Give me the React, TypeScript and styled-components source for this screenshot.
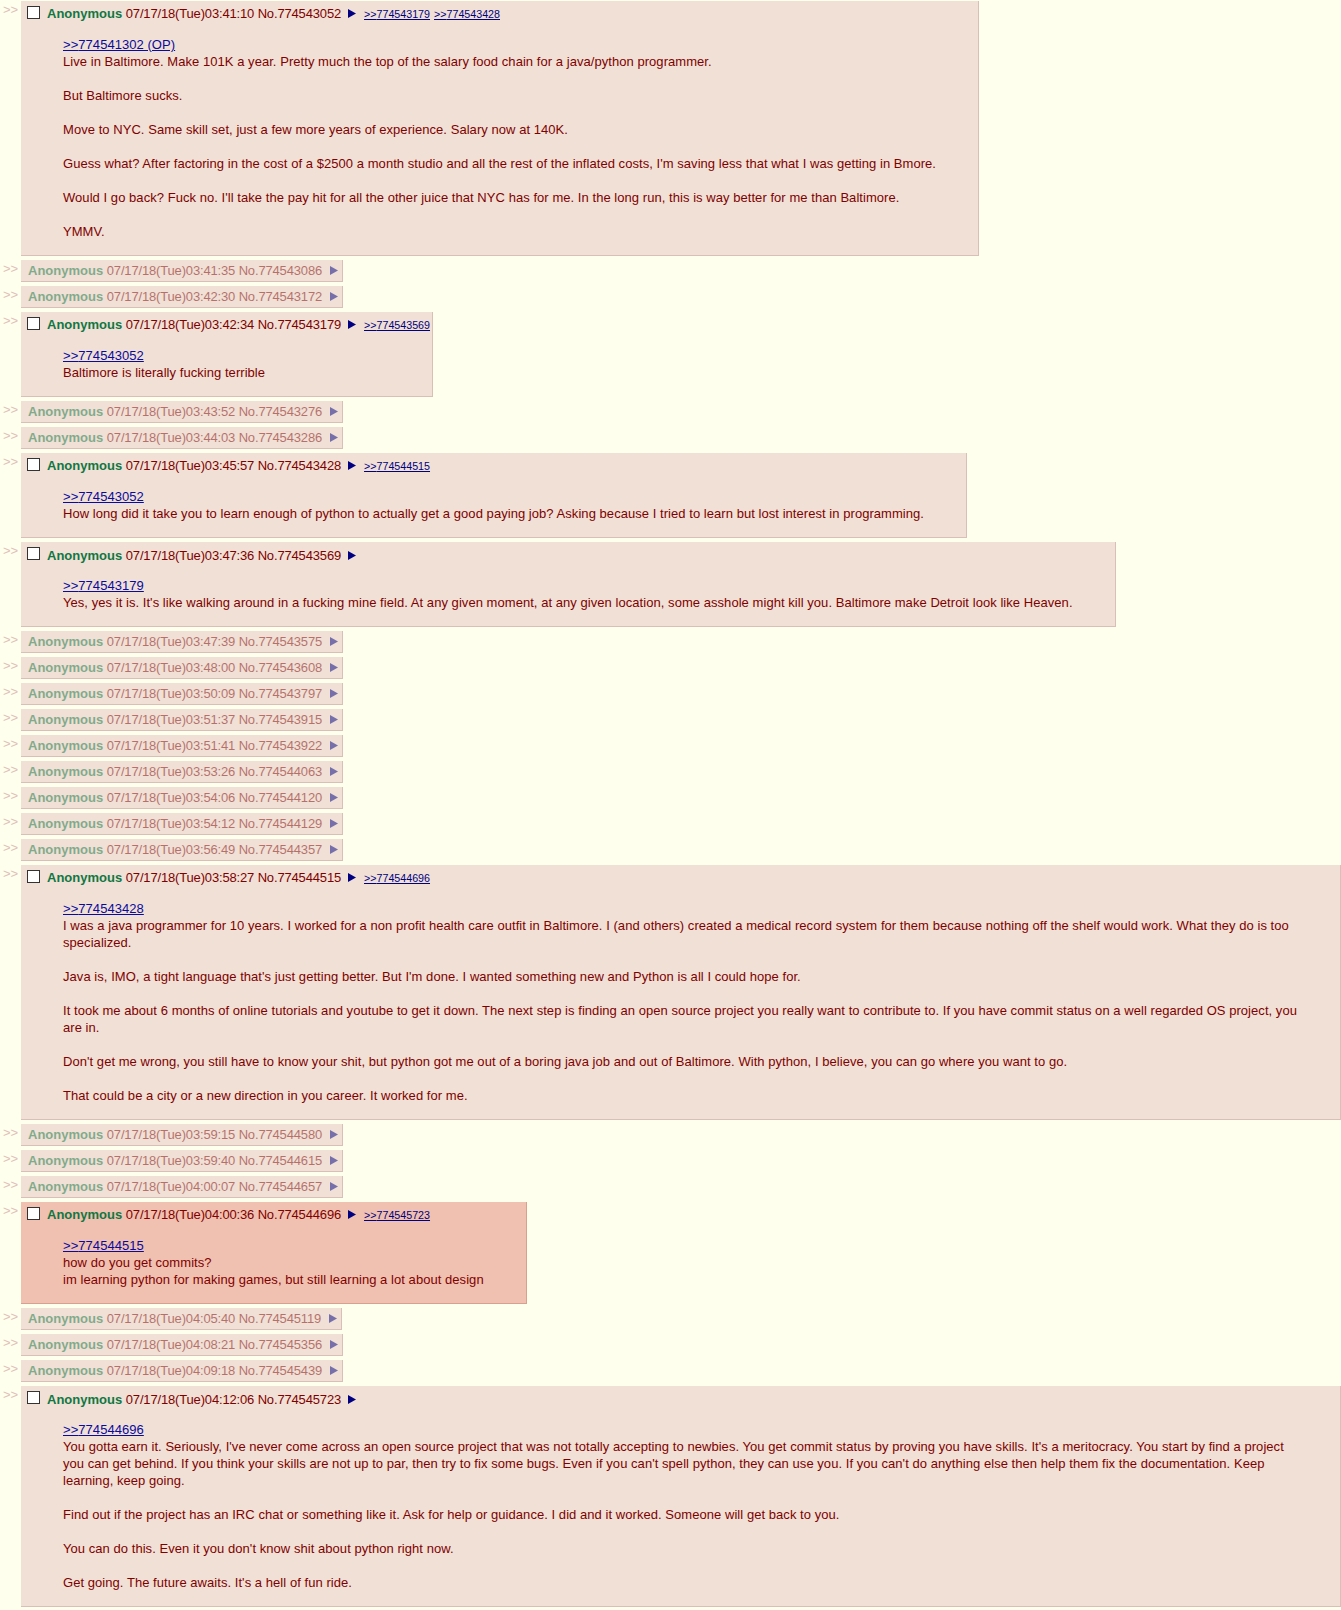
import styled, { createGlobalStyle } from 'styled-components';

type Entry = {
  hidden?: boolean;
  time: string;
  no: string;
  backlinks?: string[];
  quote?: string;
  lines?: string[];
  highlight?: boolean;
};

const thread: Entry[] = [
  {
    time: '03:41:10',
    no: '774543052',
    backlinks: ['774543179', '774543428'],
    quote: '774541302 (OP)',
    lines: [
      'Live in Baltimore. Make 101K a year. Pretty much the top of the salary food chain for a java/python programmer.',
      '',
      'But Baltimore sucks.',
      '',
      'Move to NYC. Same skill set, just a few more years of experience. Salary now at 140K.',
      '',
      "Guess what? After factoring in the cost of a $2500 a month studio and all the rest of the inflated costs, I'm saving less that what I was getting in Bmore.",
      '',
      "Would I go back? Fuck no. I'll take the pay hit for all the other juice that NYC has for me. In the long run, this is way better for me than Baltimore.",
      '',
      'YMMV.',
    ],
  },
  { hidden: true, time: '03:41:35', no: '774543086' },
  { hidden: true, time: '03:42:30', no: '774543172' },
  {
    time: '03:42:34',
    no: '774543179',
    backlinks: ['774543569'],
    quote: '774543052',
    lines: ['Baltimore is literally fucking terrible'],
  },
  { hidden: true, time: '03:43:52', no: '774543276' },
  { hidden: true, time: '03:44:03', no: '774543286' },
  {
    time: '03:45:57',
    no: '774543428',
    backlinks: ['774544515'],
    quote: '774543052',
    lines: [
      'How long did it take you to learn enough of python to actually get a good paying job? Asking because I tried to learn but lost interest in programming.',
    ],
  },
  {
    time: '03:47:36',
    no: '774543569',
    quote: '774543179',
    lines: [
      "Yes, yes it is. It's like walking around in a fucking mine field. At any given moment, at any given location, some asshole might kill you. Baltimore make Detroit look like Heaven.",
    ],
  },
  { hidden: true, time: '03:47:39', no: '774543575' },
  { hidden: true, time: '03:48:00', no: '774543608' },
  { hidden: true, time: '03:50:09', no: '774543797' },
  { hidden: true, time: '03:51:37', no: '774543915' },
  { hidden: true, time: '03:51:41', no: '774543922' },
  { hidden: true, time: '03:53:26', no: '774544063' },
  { hidden: true, time: '03:54:06', no: '774544120' },
  { hidden: true, time: '03:54:12', no: '774544129' },
  { hidden: true, time: '03:56:49', no: '774544357' },
  {
    time: '03:58:27',
    no: '774544515',
    backlinks: ['774544696'],
    quote: '774543428',
    lines: [
      'I was a java programmer for 10 years. I worked for a non profit health care outfit in Baltimore. I (and others) created a medical record system for them because nothing off the shelf would work. What they do is too specialized.',
      '',
      "Java is, IMO, a tight language that's just getting better. But I'm done. I wanted something new and Python is all I could hope for.",
      '',
      'It took me about 6 months of online tutorials and youtube to get it down. The next step is finding an open source project you really want to contribute to. If you have commit status on a well regarded OS project, you are in.',
      '',
      "Don't get me wrong, you still have to know your shit, but python got me out of a boring java job and out of Baltimore. With python, I believe, you can go where you want to go.",
      '',
      'That could be a city or a new direction in you career. It worked for me.',
    ],
  },
  { hidden: true, time: '03:59:15', no: '774544580' },
  { hidden: true, time: '03:59:40', no: '774544615' },
  { hidden: true, time: '04:00:07', no: '774544657' },
  {
    time: '04:00:36',
    no: '774544696',
    backlinks: ['774545723'],
    quote: '774544515',
    highlight: true,
    lines: [
      'how do you get commits?',
      'im learning python for making games, but still learning a lot about design',
    ],
  },
  { hidden: true, time: '04:05:40', no: '774545119' },
  { hidden: true, time: '04:08:21', no: '774545356' },
  { hidden: true, time: '04:09:18', no: '774545439' },
  {
    time: '04:12:06',
    no: '774545723',
    quote: '774544696',
    lines: [
      "You gotta earn it. Seriously, I've never come across an open source project that was not totally accepting to newbies. You get commit status by proving you have skills. It's a meritocracy. You start by find a project you can get behind. If you think your skills are not up to par, then try to fix some bugs. Even if you can't spell python, they can use you. If you can't do anything else then help them fix the documentation. Keep learning, keep going.",
      '',
      'Find out if the project has an IRC chat or something like it. Ask for help or guidance. I did and it worked. Someone will get back to you.',
      '',
      "You can do this. Even it you don't know shit about python right now.",
      '',
      "Get going. The future awaits. It's a hell of fun ride.",
    ],
  },
];

function MenuArrow() {
  return (
    <ArrowSvg width="8" height="9" viewBox="0 0 8 9">
      <polygon points="0,0 8,4.5 0,9" fill="currentColor" />
    </ArrowSvg>
  );
}

function PostInfo({ entry }: { entry: Entry }) {
  return (
    <InfoLine>
      <Name>Anonymous</Name> <DateTime>07/17/18(Tue){entry.time} No.{entry.no}</DateTime>
      <MenuArrow />
      {entry.backlinks?.map((b, i) => (
        <Backlink key={b} $first={i === 0}>
          &gt;&gt;{b}
        </Backlink>
      ))}
    </InfoLine>
  );
}

export default function App() {
  return (
    <>
      <GlobalStyle />
      <Thread>
        {thread.map(entry => (
          <Row key={entry.no}>
            <SideArrows>&gt;&gt;</SideArrows>
            {entry.hidden ? (
              <Stub>
                <StubInner>
                  <PostInfo entry={entry} />
                </StubInner>
              </Stub>
            ) : (
              <Reply $highlight={entry.highlight}>
                <Header>
                  <Check type="checkbox" />
                  <PostInfo entry={entry} />
                </Header>
                <Message>
                  <QuoteLink>&gt;&gt;{entry.quote}</QuoteLink>
                  {entry.lines?.map((line, i) => (
                    <span key={i}>
                      <br />
                      {line}
                    </span>
                  ))}
                </Message>
              </Reply>
            )}
          </Row>
        ))}
      </Thread>
    </>
  );
}

const GlobalStyle = createGlobalStyle`
  body {
    margin: 0;
    background-color: #ffffee;
    color: #800000;
    font-family: "Liberation Sans", Arial, Helvetica, sans-serif;
    font-size: 13px;
    line-height: 17px;
  }
`;

const Thread = styled.div`
  display: flex;
  flex-direction: column;
  gap: 4px;
  padding-top: 1px;
  padding-bottom: 3px;
`;

const Row = styled.div`
  display: flex;
  align-items: flex-start;
`;

const SideArrows = styled.div`
  flex: none;
  width: 21px;
  padding: 1px 0 0 3px;
  box-sizing: border-box;
  color: #e0bfb7;
  line-height: 15px;
`;

const Reply = styled.div<{ $highlight?: boolean }>`
  flex: 0 1 auto;
  min-width: 0;
  padding: 2px;
  background-color: ${props => (props.$highlight ? '#f0c0b0' : '#f0e0d6')};
  border-right: 1px solid ${props => (props.$highlight ? '#d99f91' : '#d9bfb7')};
  border-bottom: 1px solid ${props => (props.$highlight ? '#d99f91' : '#d9bfb7')};
`;

const Stub = styled.div`
  flex: none;
  padding: 2px 4px 2px 7px;
  background-color: #f0e0d6;
  border-right: 1px solid #d9bfb7;
  border-bottom: 1px solid #d9bfb7;

  svg {
    margin-left: 8px;
  }
`;

const StubInner = styled.div`
  opacity: 0.5;
`;

const Header = styled.div`
  display: flex;
  align-items: flex-end;
  height: 20px;
`;

const Check = styled.input`
  appearance: none;
  align-self: flex-start;
  flex: none;
  width: 13px;
  height: 13px;
  margin: 3px 7px 0 4px;
  background: #fff;
  border: 1px solid #333;
  border-radius: 0;
`;

const InfoLine = styled.div`
  white-space: nowrap;
  line-height: 17px;
`;

const Name = styled.span`
  color: #117743;
  font-weight: bold;
`;

const DateTime = styled.span`
  letter-spacing: -0.16px;
`;

const ArrowSvg = styled.svg`
  display: inline-block;
  margin-left: 7px;
  color: #000080;
  vertical-align: baseline;
`;

const Backlink = styled.a<{ $first?: boolean }>`
  margin-left: ${props => (props.$first ? '8px' : '4px')};
  font-size: 10.7px;
  color: #000080;
  text-decoration: underline;
`;

const Message = styled.blockquote`
  margin: 13px 40px;
  line-height: 17px;
  letter-spacing: 0.05px;
`;

const QuoteLink = styled.a`
  color: #0a0a9e;
  text-decoration: underline;
`;
